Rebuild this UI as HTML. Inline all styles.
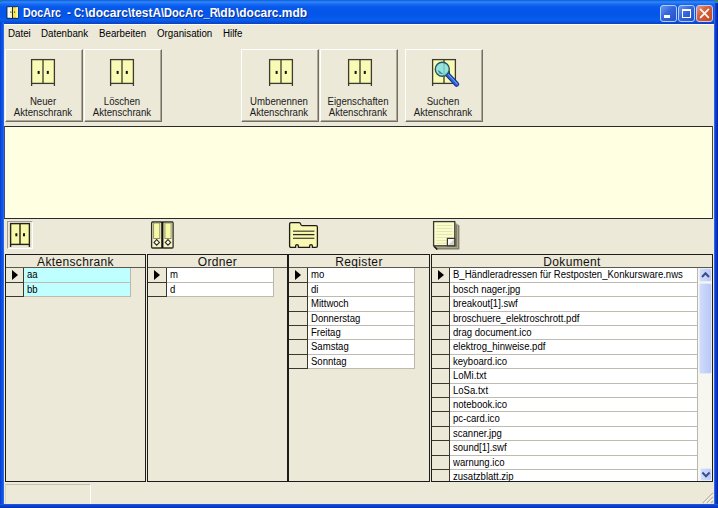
<!DOCTYPE html>
<html>
<head>
<meta charset="utf-8">
<title>DocArc</title>
<style>
html,body{margin:0;padding:0;}
body{width:718px;height:508px;overflow:hidden;background:#0831d9;font-family:"Liberation Sans",sans-serif;position:relative;}
.abs{position:absolute;}
#win{position:absolute;left:0;top:0;width:718px;height:508px;overflow:hidden;
 background:#0a3fd6;}
#lb{position:absolute;left:0;top:22px;width:4px;height:486px;background:linear-gradient(to right,#0a34c8 0,#0b4fe0 1px,#0d55e6 3px,#3f7ff0 4px);}
#rb{position:absolute;left:714px;top:3px;width:4px;height:505px;background:linear-gradient(to right,#5a86ea 0,#0c42d6 1px,#0a36c6 2.5px,#04229a 4px);}
#bb{position:absolute;left:0;top:504px;width:718px;height:4px;background:linear-gradient(to bottom,#2a66e8 0,#0b46d6 1px,#0a3bc4 3px,#062a9c 4px);}
#title{position:absolute;left:0;top:0;width:718px;height:24px;
 background:linear-gradient(to bottom,#0c58da 0px,#3189f7 2px,#176af2 4px,#0759ea 7px,#0455ea 12px,#0558ec 17px,#0a5fee 20px,#0a4fd8 22px,#0a41c2 24px);}
.tt{position:absolute;top:5.3px;font-size:12.8px;line-height:15px;font-weight:bold;color:#fff;white-space:pre;text-shadow:1px 1px 0 #0a2f8c;transform-origin:0 0;}
#client{position:absolute;left:4px;top:24px;width:710px;height:480px;background:#ece9d8;}
.menu{position:absolute;top:27.5px;font-size:10px;line-height:12px;color:#000;white-space:nowrap;transform-origin:0 0;transform:scaleX(0.975);}
.tbtn{position:absolute;top:49px;height:73px;width:78px;background:#ece9d8;box-sizing:border-box;border-top:1px solid #fff;border-left:1px solid #fff;border-right:1px solid #716f64;border-bottom:1px solid #716f64;}
.tbtn:after{content:"";position:absolute;left:0;top:0;right:0;bottom:0;border-right:1px solid #aca899;border-bottom:1px solid #aca899;}
.tbtn .lbl{position:absolute;left:-1px;width:100%;top:45.5px;text-align:center;font-size:10.7px;line-height:11.5px;color:#1a1a1a;transform:scaleX(0.90);}
#yellow{position:absolute;left:4px;top:126px;width:709px;height:93px;background:#ffffe1;border:1px solid #2a2a2a;border-left-color:#3a4a8a;border-right-color:#4a4a44;box-sizing:border-box;}
.grid{position:absolute;top:254px;height:228px;background:#ece9d8;border:1px solid #1c1c1c;box-sizing:border-box;overflow:hidden;}
.ghead{position:absolute;left:0;top:0;right:0;height:11px;padding-top:1px;border-bottom:1px solid #5a584c;text-align:center;font-size:12px;line-height:13px;color:#111;letter-spacing:0.35px;}
.ind{position:absolute;box-sizing:border-box;border-right:1px solid #3a382e;border-bottom:1px solid #3a382e;background:#ece9d8;}
.cell{position:absolute;box-sizing:border-box;border-right:1px solid #bab8ac;border-bottom:1px solid #bebcb0;background:#fff;font-size:10px;color:#000;white-space:nowrap;overflow:hidden;padding-left:2px;}
.cell span{display:inline-block;transform-origin:0 50%;transform:scaleX(0.955);}
.cy{background:#c0ffff;}
.arrow{position:absolute;width:0;height:0;border-top:5px solid transparent;border-bottom:5px solid transparent;border-left:6px solid #000;}
</style>
</head>
<body>
<div id="win">
<div id="title"></div>
<svg class="abs" style="left:6px;top:6px" width="14" height="14" viewBox="0 0 14 14">
<rect x="0.6" y="0.6" width="11.8" height="12" fill="#10122a"/>
<rect x="1.4" y="1.2" width="4.6" height="10.6" fill="#fdfdf2"/>
<rect x="4.2" y="1.2" width="1.8" height="10.6" fill="#f4f0b8"/>
<rect x="6.9" y="1.2" width="5" height="10.6" fill="#f4e752"/>
<rect x="10.4" y="1.2" width="1.5" height="10.6" fill="#fbf7a8"/>
<rect x="4.4" y="5.4" width="1" height="1.6" fill="#55533a"/><rect x="8" y="5.4" width="1" height="1.6" fill="#6a6420"/>
</svg>
<div class="tt" style="left:23.0px;transform:scaleX(0.835)">DocArc</div>
<div class="tt" style="left:66.8px;transform:scaleX(0.890)">-</div>
<div class="tt" style="left:74.1px;transform:scaleX(0.769)">C:</div>
<div class="tt" style="left:84.5px;transform:scaleX(0.942)">\docarc</div>
<div class="tt" style="left:128.0px;transform:scaleX(0.928)">\testA</div>
<div class="tt" style="left:160.7px;transform:scaleX(0.866)">\DocArc_R</div>
<div class="tt" style="left:217.4px;transform:scaleX(0.948)">\db</div>
<div class="tt" style="left:235.6px;transform:scaleX(0.933)">\docarc.mdb</div>
<div class="abs" style="left:660px;top:5px;width:16.5px;height:16.5px;box-sizing:border-box;border:1px solid #b4ccf6;border-radius:3px;background:linear-gradient(135deg,#6b97ee 0,#3566dc 45%,#2450c8 100%)"><div class="abs" style="left:3px;top:9px;width:6px;height:3px;background:#fff"></div></div>
<div class="abs" style="left:678px;top:5px;width:17px;height:16.5px;box-sizing:border-box;border:1px solid #b4ccf6;border-radius:3px;background:linear-gradient(135deg,#6b97ee 0,#3566dc 45%,#2450c8 100%)"><div class="abs" style="left:2.5px;top:2.5px;width:9.5px;height:9.5px;box-sizing:border-box;border:1px solid #fff;border-top:2.5px solid #fff"></div></div>
<div class="abs" style="left:696px;top:5px;width:17px;height:16.5px;box-sizing:border-box;border:1px solid #d9c6e6;border-radius:3px;background:linear-gradient(135deg,#e39a84 0,#d2603c 40%,#c04a22 100%)"><svg class="abs" style="left:0;top:0" width="15" height="15" viewBox="0 0 15 15"><path d="M3.6 3.4 L11.4 11.4 M11.4 3.4 L3.6 11.4" stroke="#fff4ee" stroke-width="1.8" stroke-linecap="round"/></svg></div>
<div id="client"></div>
<div class="abs" style="left:4px;top:24px;width:710px;height:1px;background:#fdfdf8"></div>
<div id="lb"></div><div id="rb"></div><div id="bb"></div>
<div class="menu" style="left:8px">Datei</div>
<div class="menu" style="left:41px">Datenbank</div>
<div class="menu" style="left:99px">Bearbeiten</div>
<div class="menu" style="left:157px">Organisation</div>
<div class="menu" style="left:223px">Hilfe</div>
<div class="tbtn" style="left:5px"><div class="lbl">Neuer<br>Aktenschrank</div></div>
<div class="tbtn" style="left:83.5px"><div class="lbl">Löschen<br>Aktenschrank</div></div>
<div class="tbtn" style="left:241px"><div class="lbl">Umbenennen<br>Aktenschrank</div></div>
<div class="tbtn" style="left:320px"><div class="lbl">Eigenschaften<br>Aktenschrank</div></div>
<div class="tbtn" style="left:405px"><div class="lbl">Suchen<br>Aktenschrank</div></div>
<svg class="abs" style="left:30.2px;top:58px" width="26" height="29" viewBox="-1 -1 26 29">
<rect x="0.6" y="0.6" width="22.8" height="23.799999999999997" fill="#f9fbb4" stroke="#3d3b30" stroke-width="1.3"/>
<line x1="12.0" y1="0.6" x2="12.0" y2="24.4" stroke="#3d3b30" stroke-width="1.3"/>
<line x1="0.6" y1="24.4" x2="0.6" y2="27" stroke="#3d3b30" stroke-width="1.3"/>
<line x1="23.4" y1="24.4" x2="23.4" y2="27" stroke="#3d3b30" stroke-width="1.3"/>
<rect x="6.632" y="11.92" width="2" height="3" fill="#111"/>
<rect x="15.799999999999997" y="11.92" width="2" height="3" fill="#111"/>
</svg>
<svg class="abs" style="left:108.5px;top:58px" width="26" height="29" viewBox="-1 -1 26 29">
<rect x="0.6" y="0.6" width="22.8" height="23.799999999999997" fill="#f9fbb4" stroke="#3d3b30" stroke-width="1.3"/>
<line x1="12.0" y1="0.6" x2="12.0" y2="24.4" stroke="#3d3b30" stroke-width="1.3"/>
<line x1="0.6" y1="24.4" x2="0.6" y2="27" stroke="#3d3b30" stroke-width="1.3"/>
<line x1="23.4" y1="24.4" x2="23.4" y2="27" stroke="#3d3b30" stroke-width="1.3"/>
<rect x="6.632" y="11.92" width="2" height="3" fill="#111"/>
<rect x="15.799999999999997" y="11.92" width="2" height="3" fill="#111"/>
</svg>
<svg class="abs" style="left:267.6px;top:58px" width="26" height="29" viewBox="-1 -1 26 29">
<rect x="0.6" y="0.6" width="22.8" height="23.799999999999997" fill="#f9fbb4" stroke="#3d3b30" stroke-width="1.3"/>
<line x1="12.0" y1="0.6" x2="12.0" y2="24.4" stroke="#3d3b30" stroke-width="1.3"/>
<line x1="0.6" y1="24.4" x2="0.6" y2="27" stroke="#3d3b30" stroke-width="1.3"/>
<line x1="23.4" y1="24.4" x2="23.4" y2="27" stroke="#3d3b30" stroke-width="1.3"/>
<rect x="6.632" y="11.92" width="2" height="3" fill="#111"/>
<rect x="15.799999999999997" y="11.92" width="2" height="3" fill="#111"/>
</svg>
<svg class="abs" style="left:346.6px;top:58px" width="26" height="29" viewBox="-1 -1 26 29">
<rect x="0.6" y="0.6" width="22.8" height="23.799999999999997" fill="#f9fbb4" stroke="#3d3b30" stroke-width="1.3"/>
<line x1="12.0" y1="0.6" x2="12.0" y2="24.4" stroke="#3d3b30" stroke-width="1.3"/>
<line x1="0.6" y1="24.4" x2="0.6" y2="27" stroke="#3d3b30" stroke-width="1.3"/>
<line x1="23.4" y1="24.4" x2="23.4" y2="27" stroke="#3d3b30" stroke-width="1.3"/>
<rect x="6.632" y="11.92" width="2" height="3" fill="#111"/>
<rect x="15.799999999999997" y="11.92" width="2" height="3" fill="#111"/>
</svg>
<svg class="abs" style="left:431px;top:58px" width="26" height="29" viewBox="-1 -1 26 29">
<rect x="0.6" y="0.6" width="22.8" height="23.799999999999997" fill="#f9fbb4" stroke="#3d3b30" stroke-width="1.3"/>
<line x1="12.0" y1="0.6" x2="12.0" y2="24.4" stroke="#3d3b30" stroke-width="1.3"/>
<line x1="0.6" y1="24.4" x2="0.6" y2="27" stroke="#3d3b30" stroke-width="1.3"/>
<line x1="23.4" y1="24.4" x2="23.4" y2="27" stroke="#3d3b30" stroke-width="1.3"/>
<rect x="6.632" y="11.92" width="2" height="3" fill="#111"/>
<rect x="15.799999999999997" y="11.92" width="2" height="3" fill="#111"/>
</svg>
<svg class="abs" style="left:432px;top:55px" width="32" height="36" viewBox="0 0 32 36">
<line x1="15.5" y1="19.5" x2="24.7" y2="29.3" stroke="#17338f" stroke-width="5" stroke-linecap="round"/>
<line x1="15.5" y1="19.5" x2="24.7" y2="29.3" stroke="#2d62d8" stroke-width="3" stroke-linecap="round"/>
<line x1="16.5" y1="19.5" x2="25.2" y2="28.8" stroke="#7fb0f2" stroke-width="1" stroke-linecap="round"/>
<circle cx="10.3" cy="14.2" r="7" fill="#7fdfe6" fill-opacity="0.82" stroke="#2b5358" stroke-width="1.4"/>
<path d="M6.5 15.5 Q7.5 18.5 10.5 18.6" stroke="#2b6a70" stroke-width="1" fill="none"/>
</svg>
<div id="yellow"></div>
<div class="abs" style="left:7px;top:221px;width:26px;height:28px;box-sizing:border-box;border-top:1px solid #a09e90;border-left:1px solid #a09e90;border-right:1px solid #fff;border-bottom:1px solid #fff;"></div>
<svg class="abs" style="left:9px;top:222.3px" width="22" height="26" viewBox="-1 -1 22 26">
<rect x="0.6" y="0.6" width="18.8" height="20.799999999999997" fill="#f7f9a8" stroke="#24221a" stroke-width="1.4"/>
<line x1="10.0" y1="0.6" x2="10.0" y2="21.4" stroke="#24221a" stroke-width="1.4"/>
<line x1="0.6" y1="21.4" x2="0.6" y2="24" stroke="#24221a" stroke-width="1.4"/>
<line x1="19.4" y1="21.4" x2="19.4" y2="24" stroke="#24221a" stroke-width="1.4"/>
<rect x="5.36" y="10.27" width="2" height="3" fill="#111"/>
<rect x="13.0" y="10.27" width="2" height="3" fill="#111"/>
</svg>
<svg class="abs" style="left:150px;top:220px" width="26" height="31" viewBox="0 0 26 31">
<rect x="1.6" y="2" width="10.4" height="26" rx="1" fill="#f3f4c2" stroke="#2e2c22" stroke-width="1.3"/>
<rect x="12.7" y="2" width="10.4" height="26" rx="1" fill="#f3f4c2" stroke="#2e2c22" stroke-width="1.3"/>
<line x1="12.35" y1="1.5" x2="12.35" y2="28.5" stroke="#111" stroke-width="1.6"/>
<rect x="3.6" y="3" width="6.2" height="15.5" fill="#f6f8a2" stroke="#8a8870" stroke-width="0.9"/>
<rect x="14.9" y="3" width="6.2" height="15.5" fill="#f6f8a2" stroke="#8a8870" stroke-width="0.9"/>
<path d="M6.7 19.6 L9.4 22.4 L6.7 25.2 L4 22.4 Z" fill="#fff" stroke="#2e2c22" stroke-width="1.1"/>
<path d="M18 19.6 L20.7 22.4 L18 25.2 L15.3 22.4 Z" fill="#fff" stroke="#2e2c22" stroke-width="1.1"/>
</svg>
<svg class="abs" style="left:287px;top:220px" width="34" height="30" viewBox="0 0 34 30">
<path d="M2.6 4 Q2.6 2.6 4 2.6 L12 2.6 Q13.4 2.6 13.6 4 Q13.8 5.6 15.2 5.6 L29 5.6 Q30.4 5.6 30.4 7 L30.4 26 Q30.4 27.4 29 27.4 L25.4 27.4 L25.4 26 Q25.4 24.6 24 24.6 Q22.6 24.6 22.6 26 L22.6 27.4 L11.4 27.4 L11.4 26 Q11.4 24.6 10 24.6 Q8.6 24.6 8.6 26 L8.6 27.4 L4 27.4 Q2.6 27.4 2.6 26 Z" fill="#f9f9b4" stroke="#1e1c14" stroke-width="1.3"/>
<line x1="6" y1="11.2" x2="27.4" y2="11.2" stroke="#4e4c3a" stroke-width="1.3"/>
<line x1="6" y1="14.6" x2="27.4" y2="14.6" stroke="#2e2c20" stroke-width="1.3"/>
<line x1="6" y1="18.3" x2="27.4" y2="18.3" stroke="#4e4c3a" stroke-width="1.3"/>
</svg>
<svg class="abs" style="left:431px;top:219px" width="32" height="33" viewBox="0 0 32 33">
<path d="M6 27.5 L24.5 27.5 L24.5 4 L28.4 6.6 L28.4 30.4 L6 30.4 L3.4 27.5 Z" fill="#7f7d66"/>
<path d="M24.6 4.5 L26.6 5.8 L26.6 28.6 L5 28.6" fill="none" stroke="#b5b39a" stroke-width="0.9"/>
<path d="M3 27.2 L6.2 30.6" stroke="#111" stroke-width="1.5"/>
<rect x="2.6" y="2.6" width="21.2" height="24.2" fill="#fbfccd" stroke="#3a382c" stroke-width="1.3"/>
<g stroke="#e1e3a8" stroke-width="0.9">
<line x1="5.5" y1="6.5" x2="21.5" y2="6.5"/><line x1="5.5" y1="9.5" x2="21.5" y2="9.5"/><line x1="5.5" y1="12.5" x2="21.5" y2="12.5"/>
<line x1="5.5" y1="15.5" x2="21.5" y2="15.5"/><line x1="5.5" y1="18.5" x2="21.5" y2="18.5"/><line x1="5.5" y1="21.5" x2="16" y2="21.5"/><line x1="5.5" y1="24.2" x2="16" y2="24.2"/>
</g>
<rect x="16.4" y="19.4" width="7.4" height="7.4" fill="#d4d3cd" stroke="#3a382c" stroke-width="1.2"/>
<path d="M17 26.2 L17 20 L23.2 20 Z" fill="#fafaf6"/>
</svg>
<div class="grid" style="left:5px;width:141px"><div class="ghead">Aktenschrank</div>
<div class="ind" style="left:0;top:13px;width:18px;height:15px"></div>
<div class="cell cy" style="left:18px;top:13px;width:107px;height:15px;line-height:14px;padding-left:2.6px"><span>aa</span></div>
<div class="ind" style="left:0;top:28px;width:18px;height:14px"></div>
<div class="cell cy" style="left:18px;top:28px;width:107px;height:14px;line-height:13px;padding-left:2.6px"><span>bb</span></div>
<div class="arrow" style="left:5.5px;top:15px"></div>
</div>
<div class="grid" style="left:147px;width:141px"><div class="ghead">Ordner</div>
<div class="ind" style="left:0;top:13px;width:19px;height:15px"></div>
<div class="cell" style="left:19px;top:13px;width:107px;height:15px;line-height:14px;padding-left:2.6px"><span>m</span></div>
<div class="ind" style="left:0;top:28px;width:19px;height:14px"></div>
<div class="cell" style="left:19px;top:28px;width:107px;height:14px;line-height:13px;padding-left:2.6px"><span>d</span></div>
<div class="arrow" style="left:6.0px;top:15px"></div>
</div>
<div class="grid" style="left:288px;width:142px"><div class="ghead">Register</div>
<div class="ind" style="left:0;top:13px;width:19px;height:15px"></div>
<div class="cell" style="left:19px;top:13px;width:107px;height:15px;line-height:14px;padding-left:2.6px"><span>mo</span></div>
<div class="ind" style="left:0;top:28px;width:19px;height:14px"></div>
<div class="cell" style="left:19px;top:28px;width:107px;height:14px;line-height:13px;padding-left:2.6px"><span>di</span></div>
<div class="ind" style="left:0;top:42px;width:19px;height:15px"></div>
<div class="cell" style="left:19px;top:42px;width:107px;height:15px;line-height:14px;padding-left:2.6px"><span>Mittwoch</span></div>
<div class="ind" style="left:0;top:57px;width:19px;height:14px"></div>
<div class="cell" style="left:19px;top:57px;width:107px;height:14px;line-height:13px;padding-left:2.6px"><span>Donnerstag</span></div>
<div class="ind" style="left:0;top:71px;width:19px;height:14px"></div>
<div class="cell" style="left:19px;top:71px;width:107px;height:14px;line-height:13px;padding-left:2.6px"><span>Freitag</span></div>
<div class="ind" style="left:0;top:85px;width:19px;height:15px"></div>
<div class="cell" style="left:19px;top:85px;width:107px;height:15px;line-height:14px;padding-left:2.6px"><span>Samstag</span></div>
<div class="ind" style="left:0;top:100px;width:19px;height:14px"></div>
<div class="cell" style="left:19px;top:100px;width:107px;height:14px;line-height:13px;padding-left:2.6px"><span>Sonntag</span></div>
<div class="arrow" style="left:6.0px;top:15px"></div>
</div>
<div class="grid" style="left:431px;width:282px"><div class="ghead">Dokument</div>
<div class="ind" style="left:0;top:13px;width:18px;height:15px"></div>
<div class="cell" style="left:18px;top:13px;width:248px;height:15px;line-height:14px;padding-left:3.2px"><span>B_Händleradressen für Restposten_Konkursware.nws</span></div>
<div class="ind" style="left:0;top:28px;width:18px;height:14px"></div>
<div class="cell" style="left:18px;top:28px;width:248px;height:14px;line-height:13px;padding-left:3.2px"><span>bosch nager.jpg</span></div>
<div class="ind" style="left:0;top:42px;width:18px;height:15px"></div>
<div class="cell" style="left:18px;top:42px;width:248px;height:15px;line-height:14px;padding-left:3.2px"><span>breakout[1].swf</span></div>
<div class="ind" style="left:0;top:57px;width:18px;height:14px"></div>
<div class="cell" style="left:18px;top:57px;width:248px;height:14px;line-height:13px;padding-left:3.2px"><span>broschuere_elektroschrott.pdf</span></div>
<div class="ind" style="left:0;top:71px;width:18px;height:14px"></div>
<div class="cell" style="left:18px;top:71px;width:248px;height:14px;line-height:13px;padding-left:3.2px"><span>drag document.ico</span></div>
<div class="ind" style="left:0;top:85px;width:18px;height:15px"></div>
<div class="cell" style="left:18px;top:85px;width:248px;height:15px;line-height:14px;padding-left:3.2px"><span>elektrog_hinweise.pdf</span></div>
<div class="ind" style="left:0;top:100px;width:18px;height:14px"></div>
<div class="cell" style="left:18px;top:100px;width:248px;height:14px;line-height:13px;padding-left:3.2px"><span>keyboard.ico</span></div>
<div class="ind" style="left:0;top:114px;width:18px;height:15px"></div>
<div class="cell" style="left:18px;top:114px;width:248px;height:15px;line-height:14px;padding-left:3.2px"><span>LoMi.txt</span></div>
<div class="ind" style="left:0;top:129px;width:18px;height:14px"></div>
<div class="cell" style="left:18px;top:129px;width:248px;height:14px;line-height:13px;padding-left:3.2px"><span>LoSa.txt</span></div>
<div class="ind" style="left:0;top:143px;width:18px;height:14px"></div>
<div class="cell" style="left:18px;top:143px;width:248px;height:14px;line-height:13px;padding-left:3.2px"><span>notebook.ico</span></div>
<div class="ind" style="left:0;top:157px;width:18px;height:15px"></div>
<div class="cell" style="left:18px;top:157px;width:248px;height:15px;line-height:14px;padding-left:3.2px"><span>pc-card.ico</span></div>
<div class="ind" style="left:0;top:172px;width:18px;height:14px"></div>
<div class="cell" style="left:18px;top:172px;width:248px;height:14px;line-height:13px;padding-left:3.2px"><span>scanner.jpg</span></div>
<div class="ind" style="left:0;top:186px;width:18px;height:15px"></div>
<div class="cell" style="left:18px;top:186px;width:248px;height:15px;line-height:14px;padding-left:3.2px"><span>sound[1].swf</span></div>
<div class="ind" style="left:0;top:201px;width:18px;height:14px"></div>
<div class="cell" style="left:18px;top:201px;width:248px;height:14px;line-height:13px;padding-left:3.2px"><span>warnung.ico</span></div>
<div class="ind" style="left:0;top:215px;width:18px;height:14px"></div>
<div class="cell" style="left:18px;top:215px;width:248px;height:14px;line-height:13px;padding-left:3.2px"><span>zusatzblatt.zip</span></div>
<div class="arrow" style="left:5.5px;top:15px"></div>
<div class="abs" style="left:266px;top:13px;width:14px;height:214px;background:#f8f7ef;box-sizing:border-box"></div>
<div class="abs" style="left:267px;top:13px;width:13px;height:14px;background:linear-gradient(to right,#d3ddfa,#bccbf8);border:1px solid #e6ecfd;border-radius:2px;box-sizing:border-box"></div>
<svg class="abs" style="left:267px;top:13px" width="13" height="14" viewBox="0 0 13 14"><path d="M3 9 L6.5 5.2 L10 9" fill="none" stroke="#3a4f8a" stroke-width="2"/></svg>
<div class="abs" style="left:267px;top:28px;width:13px;height:91px;background:linear-gradient(to right,#d0dbfb,#b9c8f7);border:1px solid #e2e9fd;border-radius:2px;box-sizing:border-box"></div>
<div class="abs" style="left:268px;top:213px;width:12px;height:13px;background:linear-gradient(to right,#d3ddfa,#bccbf8);border:1px solid #e6ecfd;border-radius:2px;box-sizing:border-box"></div>
<svg class="abs" style="left:267px;top:213px" width="13" height="13" viewBox="0 0 13 13"><path d="M3.4 4.5 L7 8.3 L10.6 4.5" fill="none" stroke="#3a4f8a" stroke-width="2"/></svg>
</div>
<div class="abs" style="left:5px;top:484px;width:86px;height:20px;box-sizing:border-box;border-top:1px solid #c5c2b2;border-left:1px solid #d8d5c6;border-right:1px solid #fff;"></div>
<svg class="abs" style="left:700px;top:490px" width="14" height="14" viewBox="0 0 14 14">
<g stroke="#b8b5a2" stroke-width="1.2"><line x1="13" y1="3" x2="3" y2="13"/><line x1="13" y1="7" x2="7" y2="13"/><line x1="13" y1="11" x2="11" y2="13"/></g>
<g stroke="#fff" stroke-width="1"><line x1="13" y1="4.3" x2="4.3" y2="13"/><line x1="13" y1="8.3" x2="8.3" y2="13"/></g>
</svg>
<div class="abs" style="left:715px;top:0;width:3px;height:2px;background:#3f8a4a"></div>
<div class="abs" style="left:0;top:0;width:2px;height:2px;background:#1f7a9a"></div>
</div>
</body>
</html>
